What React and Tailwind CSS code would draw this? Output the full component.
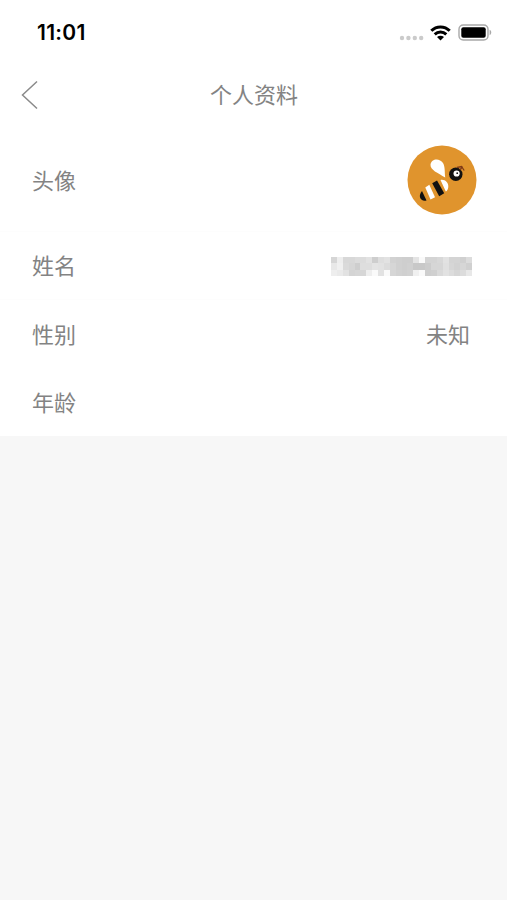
import React from 'react';

// Gray level of each mosaic cell, left to right
const mosaic = [
    [214, 238, 216, 216, 220, 220, 226, 206, 222, 226, 210, 208, 206, 206, 228, 250, 212, 212, 216, 226, 212, 212, 208, 220],
    [232, 240, 218, 214, 206, 222, 222, 228, 226, 220, 214, 208, 206, 208, 200, 200, 204, 214, 214, 224, 214, 210, 214, 208],
    [238, 234, 226, 212, 214, 214, 238, 250, 226, 250, 214, 210, 208, 210, 240, 250, 206, 208, 218, 226, 220, 214, 220, 232],
];

function StatusBar() {
    return (
        <div className="h-[61px] flex items-center justify-between pl-[37px] pr-[15px] pt-[4px]">
            <span className="font-[Inter,sans-serif] text-[21px] font-semibold text-black tracking-[0.3px]">11:01</span>
            <div className="flex items-center">
                {/* No signal */}
                <svg width="26" height="6" className="mt-[10px] mr-[5px]" fill="#cbcbcb">
                    <circle cx="3" cy="3" r="2.2" />
                    <circle cx="9.4" cy="3" r="2.2" />
                    <circle cx="15.8" cy="3" r="2.2" />
                    <circle cx="22.2" cy="3" r="2.2" />
                </svg>
                <svg width="21" height="16" viewBox="0 0 21 16" className="mr-[7px]" fill="none" stroke="#000" strokeWidth="3">
                    <path d="M1.3 5.8C6.5 .7 14.5 .7 19.7 5.8" />
                    <path d="M4.7 9.4C8 6.3 13 6.3 16.3 9.4" />
                    <path d="M10.5 15.5L7 12.1C9.1 10.3 11.9 10.3 14 12.1Z" fill="#000" stroke="none" />
                </svg>
                <svg width="34" height="17" viewBox="0 0 34 17">
                    <rect x="1" y="1" width="29" height="15" rx="4.2" fill="none" stroke="#a8a8a8" strokeWidth="1.4" />
                    <rect x="3.3" y="3.3" width="24.4" height="10.4" rx="2" fill="#000" />
                    <path d="M31.6 5.8C33.8 6.6 33.8 10.4 31.6 11.2Z" fill="#a8a8a8" />
                </svg>
            </div>
        </div>
    );
}

function Header() {
    return (
        <div className="h-[68px] grid grid-cols-[60px_1fr_60px] items-center">
            <button className="pl-[20px]" aria-label="返回">
                <svg width="19" height="30" viewBox="0 0 19 30" fill="none" stroke="#8a8a8a" strokeWidth="1.5">
                    <path d="M17 1.5L2.5 15L17 28.5" />
                </svg>
            </button>
            <h1 className="text-center text-[22px] pb-[4px] pl-[1px]">个人资料</h1>
        </div>
    );
}

function BeeAvatar() {
    return (
        <svg width="70" height="70" viewBox="0 0 70 70">
            <circle cx="35" cy="35" r="34.5" fill="#e0942d" />
            <path d="M38.2 32.5C31 28 23 25 23.5 19.5C24.3 13.5 32.5 12.5 36 18C38.3 22 37.5 27 38.2 32.5Z" fill="#fff" />
            <path d="M15 46L19.5 55.5C13.5 57 10.5 51 15 46Z" fill="#111" />
            <path d="M18.3 42.5L22.3 39.8L28 52.2L23.5 54.5Z" fill="#fff" />
            <path d="M25.2 38.2L30 35.5L37.2 48.3L32.2 51.3Z" fill="#111" />
            <path d="M33.5 35C38 34 41.8 38 41.3 42C41 44.5 40 46 38.8 46.5Z" fill="#fff" />
            <circle cx="48.8" cy="29.2" r="6.7" fill="#111" />
            <circle cx="49.6" cy="28.5" r="3.1" fill="#fff" />
            <circle cx="50.2" cy="28.2" r="0.9" fill="#111" />
            <path d="M50 22.5L54.5 21.5L57.2 25.5M53 25L55.5 21.5" fill="none" stroke="#803b18" strokeWidth="1.3" />
        </svg>
    );
}

function MaskedName() {
    return (
        <svg width="141" height="19" viewBox="0 0 144 18" preserveAspectRatio="none" shapeRendering="crispEdges" className="mt-[2px]">
            {mosaic.map((row, y) =>
                row.map((v, x) => (
                    <rect key={`${x}-${y}`} x={x * 6} y={y * 6} width="6" height="6" fill={`rgb(${v},${v},${v})`} />
                ))
            )}
        </svg>
    );
}

function Row({ label, className, children }) {
    return (
        <div className={`flex items-center justify-between pl-[32px] ${className}`}>
            <span className="pb-[3px]">{label}</span>
            {children}
        </div>
    );
}

export default function App() {
    return (
        <div className="min-h-screen bg-[#f7f7f7] font-['Noto_Sans_CJK_SC',sans-serif] text-[#838383]">
            <div className="bg-white">
                <StatusBar />
                <Header />
                <div className="text-[22px] leading-[32px]">
                    <Row label="头像" className="h-[103px] pr-[30px] border-b border-[#fdfdfd]">
                        <BeeAvatar />
                    </Row>
                    <Row label="姓名" className="h-[68px] pr-[35px] border-b border-[#fdfdfd]">
                        <MaskedName />
                    </Row>
                    <Row label="性别" className="h-[68px] pr-[37px]">
                        <span className="pb-[3px]">未知</span>
                    </Row>
                    <Row label="年龄" className="h-[68px] pr-[37px]" />
                </div>
            </div>
        </div>
    );
}
